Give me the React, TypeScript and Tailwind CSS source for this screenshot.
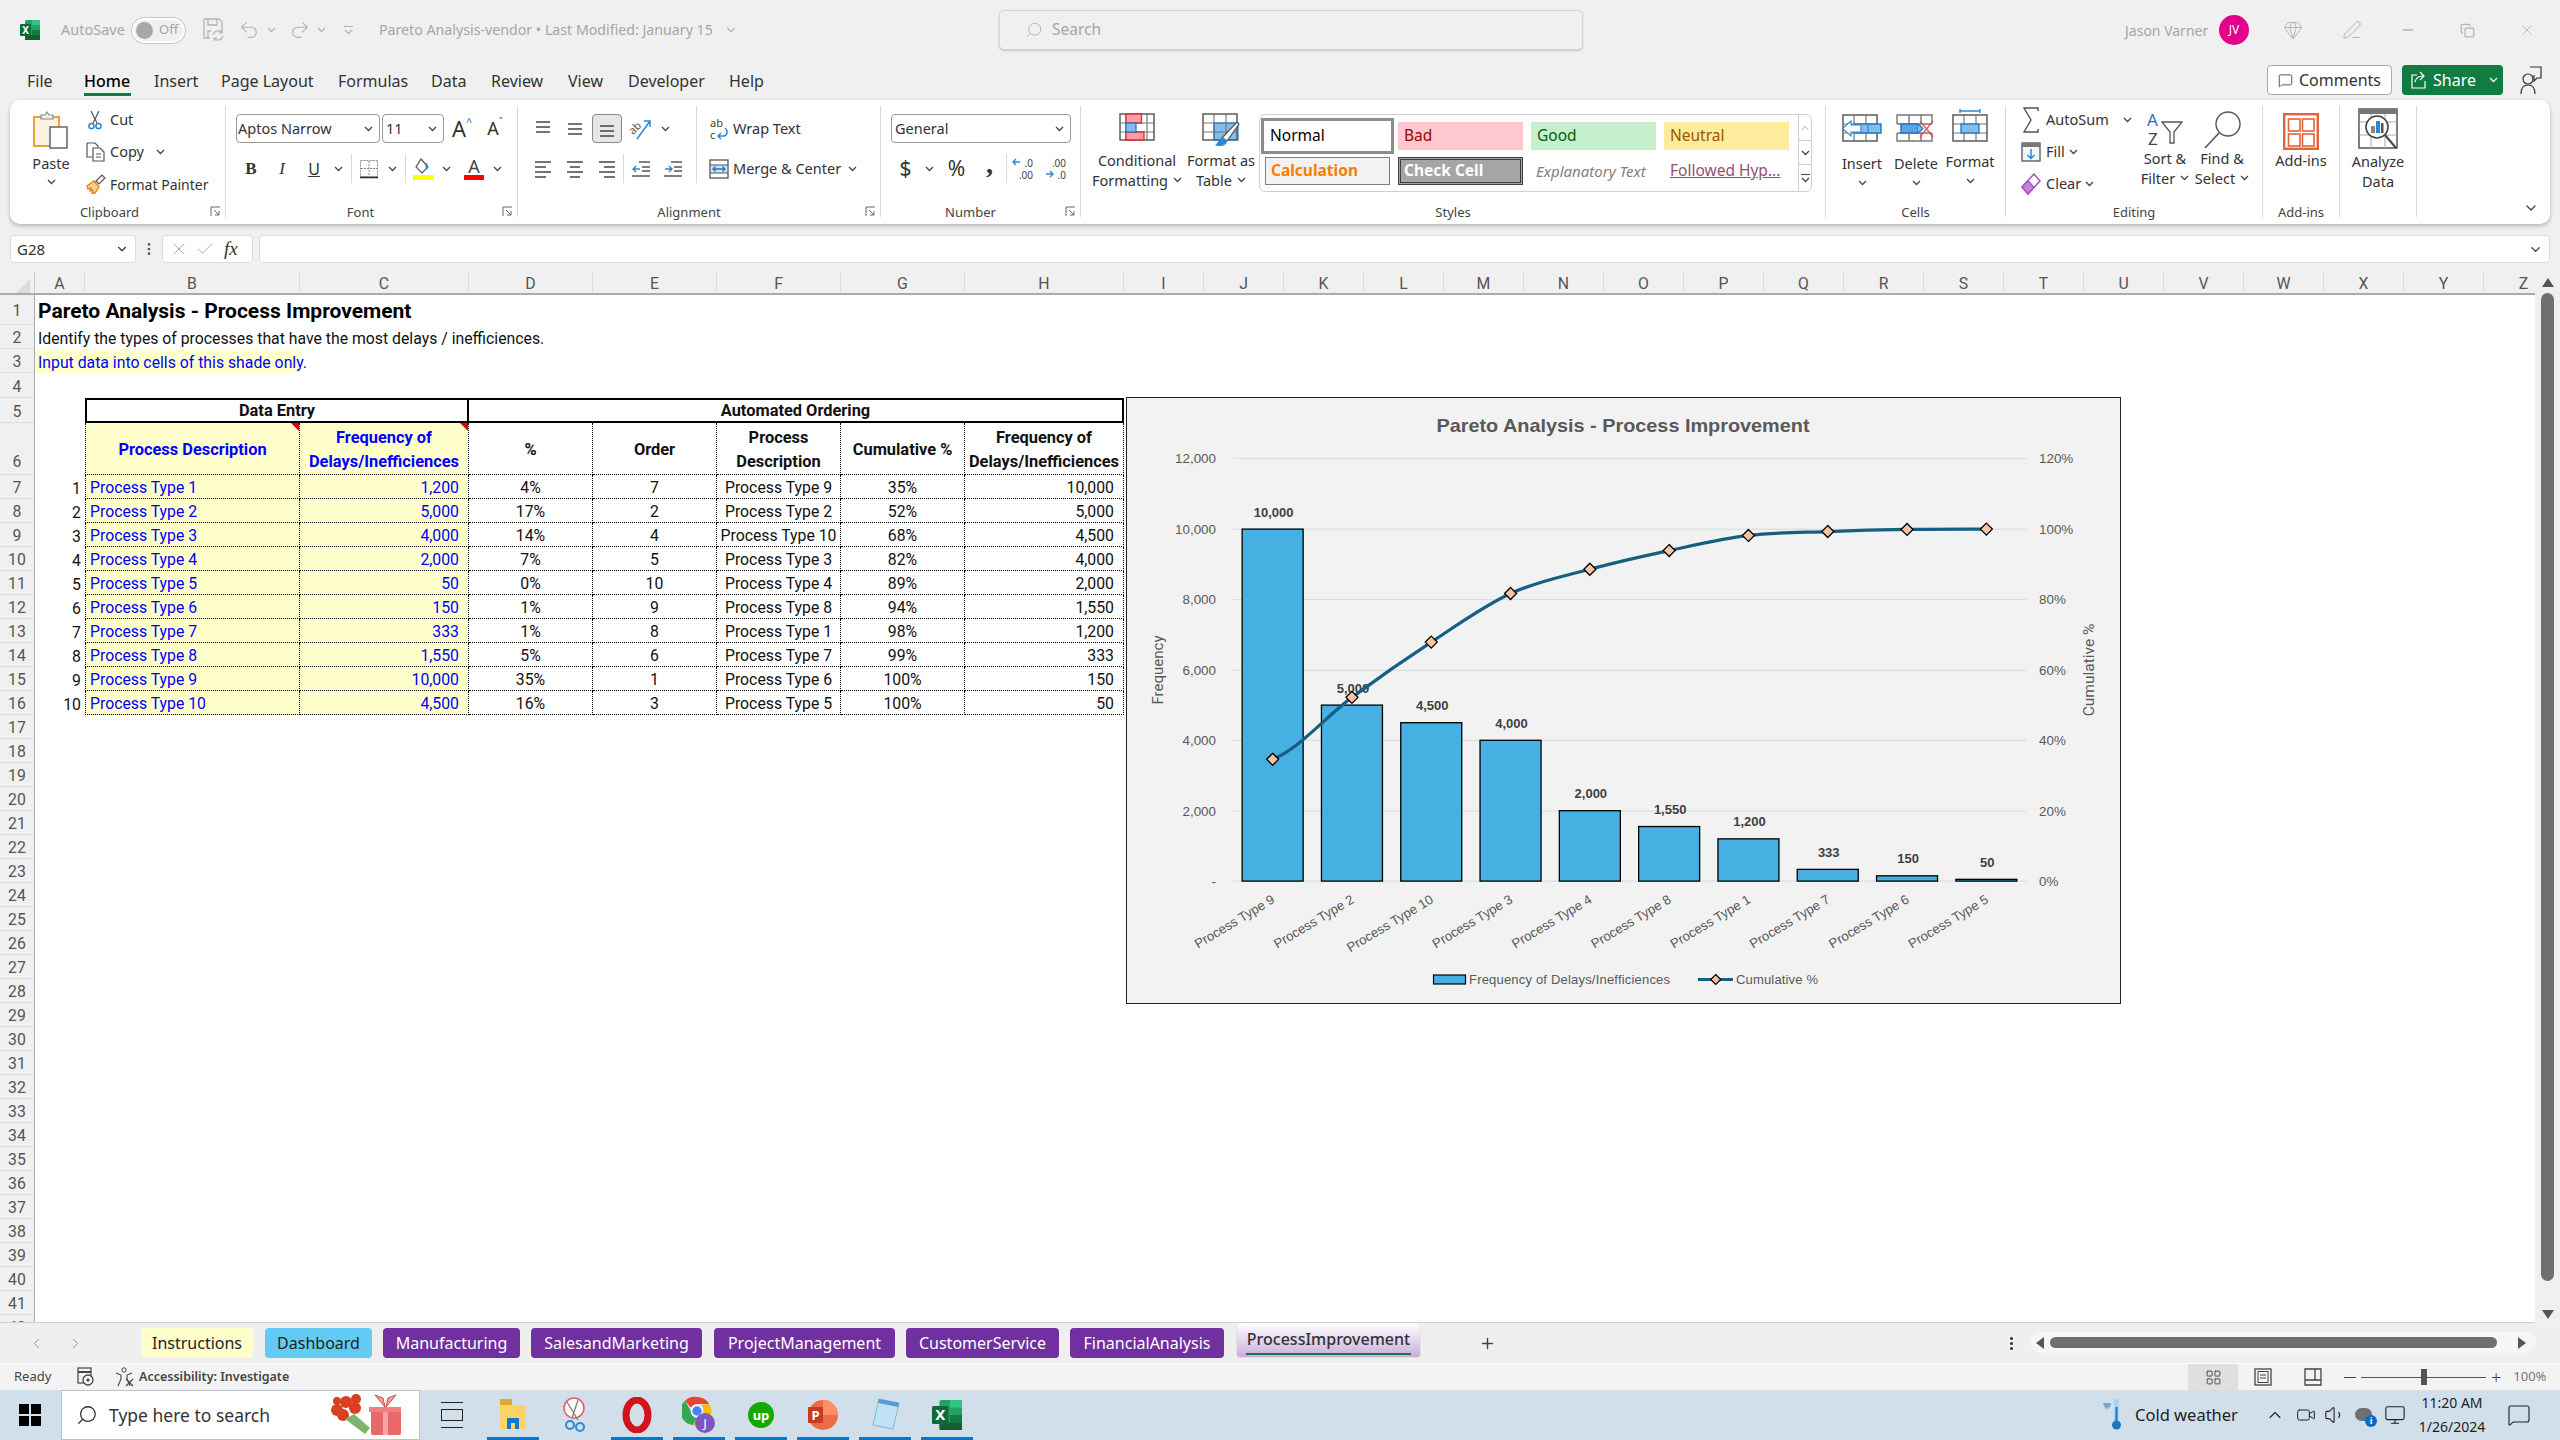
import {
  Check,
  ChevronDown,
  ChevronLeft,
  ChevronRight,
  ChevronUp,
  Copy,
  Gem,
  LayoutGrid,
  MessageSquare,
  Minus,
  Monitor,
  MoreVertical,
  PenLine,
  Plus,
  Redo2,
  Search,
  Undo2,
  Video,
  Volume1,
  X
} from 'lucide-react';

const Chev = ({ color = '#444' }: { color?: string }) => (
  <svg width="9" height="6" viewBox="0 0 9 6" className="shrink-0">
    <path d="M1 1l3.5 3.5L8 1" fill="none" stroke={color} strokeWidth="1.3" />
  </svg>
);

const Launcher = () => (
  <svg width="11" height="11" viewBox="0 0 11 11" className="absolute right-[4px] bottom-0">
    <path d="M1 10V1h9M4 4l5 5M9 5v4H5" fill="none" stroke="#666" strokeWidth="1" />
  </svg>
);

const Lines = ({ rows }: { rows: number[][] }) => (
  <svg width="20" height="20" viewBox="0 0 20 20">
    {rows.map((r, i) => (
      <line key={i} x1={r[0]} x2={r[1]} y1={r[2]} y2={r[2]} stroke="#444" strokeWidth="1.5" />
    ))}
  </svg>
);

const ExcelLogo = ({ size = 20 }: { size?: number }) => (
  <svg width={size} height={size} viewBox="0 0 20 20">
    <rect x="5" y="0" width="15" height="20" rx="1.5" fill="#21a366" />
    <rect x="12" y="0" width="8" height="5" fill="#33c481" />
    <rect x="12" y="10" width="8" height="5" fill="#107c41" />
    <rect x="5" y="15" width="15" height="5" fill="#185c37" />
    <rect x="0" y="4" width="11" height="12" rx="1" fill="#0e6b38" />
    <text x="5.5" y="13.5" fontSize="10" fontWeight="700" fill="#fff" textAnchor="middle">X</text>
  </svg>
);

const PasteIcon = () => (
  <svg width="36" height="40" viewBox="0 0 36 40">
    <rect x="1" y="7" width="25" height="29" fill="#fdf3e3" stroke="#e8a33d" strokeWidth="2" />
    <path d="M8 9V5h4l2-3 2 3h4v4z" fill="#f2f2f2" stroke="#888" strokeWidth="1.2" />
    <rect x="17" y="17" width="17" height="21" fill="#fff" stroke="#666" strokeWidth="1.5" />
  </svg>
);

const CutIcon = () => (
  <svg width="14" height="20" viewBox="0 0 14 20">
    <path d="M3 1l6 12M11 1L5 13" stroke="#555" strokeWidth="1.2" fill="none" />
    <circle cx="3.5" cy="16" r="2.6" fill="none" stroke="#2b88d8" strokeWidth="1.5" />
    <circle cx="10.5" cy="16" r="2.6" fill="none" stroke="#2b88d8" strokeWidth="1.5" />
  </svg>
);

const CopyIcon = () => (
  <svg width="20" height="20" viewBox="0 0 20 20">
    <path d="M1 1h8l3 3v2M1 1v14h5" fill="#fff" stroke="#555" strokeWidth="1.2" />
    <path d="M7 6h7l4 4v9H7z" fill="#fff" stroke="#555" strokeWidth="1.2" />
    <path d="M10 12h5M10 15h5" stroke="#555" strokeWidth="1" />
  </svg>
);

const PainterIcon = () => (
  <svg width="20" height="20" viewBox="0 0 20 20">
    <path d="M1 12l7-5 5 6-4 6H6l1-3-3 1 1-3-3 1z" fill="#fbd38a" stroke="#e07b1a" strokeWidth="1.3" />
    <path d="M10 7l6-6 3 3-6 6z" fill="#fff" stroke="#555" strokeWidth="1.2" />
  </svg>
);

const BordersIcon = () => (
  <svg width="20" height="20" viewBox="0 0 20 20">
    <rect x="1.5" y="1.5" width="17" height="16" fill="none" stroke="#888" strokeWidth="1" strokeDasharray="2 1" />
    <path d="M10 2v15M2 9.5h16" stroke="#888" strokeWidth="1" strokeDasharray="2 1" />
    <path d="M1 18.5h18" stroke="#333" strokeWidth="1.6" />
  </svg>
);

const FillColorIcon = () => (
  <svg width="22" height="24" viewBox="0 0 22 24">
    <path d="M9 2l7 8-6 6-6-6z" fill="#fff" stroke="#555" strokeWidth="1.2" />
    <path d="M14 6l1 6" stroke="#2b88d8" strokeWidth="2" />
    <rect x="1" y="18" width="20" height="5" fill="#ffff00" />
  </svg>
);

const FontColorIcon = () => (
  <svg width="20" height="24" viewBox="0 0 20 24" className="overflow-visible">
    <text x="10" y="16" fontSize="18" textAnchor="middle" fill="#444">A</text>
    <rect x="0" y="18" width="20" height="5" fill="#ff0000" />
  </svg>
);

const OrientIcon = () => (
  <svg width="24" height="24" viewBox="0 0 24 24" className="overflow-visible">
    <text x="0" y="15" fontSize="11" fill="#555" transform="rotate(-45 6 12)">ab</text>
    <path d="M8 22L21 4M15 4h6v6" fill="none" stroke="#2b88d8" strokeWidth="1.5" />
  </svg>
);

const WrapIcon = () => (
  <svg width="20" height="24" viewBox="0 0 20 24" className="overflow-visible">
    <text x="1" y="10" fontSize="11" fill="#444">ab</text>
    <text x="1" y="22" fontSize="11" fill="#444">c</text>
    <path d="M16 11c3 2 3 7-1 8H9M12 16l-3 3 3 3" fill="none" stroke="#2b88d8" strokeWidth="1.4" />
  </svg>
);

const MergeIcon = () => (
  <svg width="20" height="20" viewBox="0 0 20 20">
    <rect x="1" y="1" width="18" height="18" fill="#fff" stroke="#555" strokeWidth="1.3" />
    <rect x="2" y="6" width="16" height="8" fill="#cfe4f7" />
    <path d="M1 6h18M1 14h18" stroke="#555" strokeWidth="1" />
    <path d="M4 10h12M6.5 7.5L4 10l2.5 2.5M13.5 7.5L16 10l-2.5 2.5" fill="none" stroke="#1f74c4" strokeWidth="1.3" />
  </svg>
);

const IndentIcon = ({ out }: { out?: boolean }) => (
  <svg width="20" height="20" viewBox="0 0 20 20">
    <path d="M8 3h11M11 8h8M11 12h8M1 17h18" stroke="#555" strokeWidth="1.4" />
    <path
      d={out ? 'M9 10H2M5 7l-3 3 3 3' : 'M2 10h7M6 7l3 3-3 3'}
      fill="none"
      stroke="#2b88d8"
      strokeWidth="1.4"
    />
  </svg>
);

const DecimalIcon = ({ more }: { more?: boolean }) => (
  <svg width="24" height="24" viewBox="0 0 24 24" className="overflow-visible">
    <text x="22" y="10" fontSize="10" textAnchor="end" fill="#444">{more ? '.0' : '.00'}</text>
    <text x="22" y="22" fontSize="10" textAnchor="end" fill="#444">{more ? '.00' : '.0'}</text>
    <path
      d={more ? 'M9 5H2M5 2L2 5l3 3' : 'M2 17h7M6 14l3 3-3 3'}
      fill="none"
      stroke="#2b88d8"
      strokeWidth="1.4"
    />
  </svg>
);

// dark outer frame with the sheet lines of a ribbon icon
const GridBase = ({ xs, ys, w = 35, h = 27 }: { xs: number[]; ys: number[]; w?: number; h?: number }) => (
  <>
    {xs.map((x) => (
      <line key={x} x1={x} x2={x} y1="1" y2={h} stroke="#777" strokeWidth="1.2" />
    ))}
    {ys.map((y) => (
      <line key={y} x1="1" x2={w} y1={y} y2={y} stroke="#777" strokeWidth="1.2" />
    ))}
    <rect x="1" y="1" width={w - 1} height={h - 1} fill="none" stroke="#666" strokeWidth="1.6" />
  </>
);

const CondFormatIcon = () => (
  <svg width="36" height="28" viewBox="0 0 36 28">
    <GridBase xs={[7, 28]} ys={[10, 19]} />
    <path d="M7 1h15.5v9H7zM7 19h18v8H7z" fill="#ff9da3" stroke="#d92c2c" strokeWidth="1.3" />
    <rect x="7" y="10" width="10" height="9" fill="#85bde9" stroke="#1f74c4" strokeWidth="1.2" />
  </svg>
);

const FormatTableIcon = () => (
  <svg width="38" height="36" viewBox="0 0 38 36">
    <rect x="12" y="10" width="24" height="17" fill="#85bde9" />
    <GridBase xs={[12, 24]} ys={[10, 19]} />
    <path d="M12 10h24v17H12z" fill="none" stroke="#1f74c4" strokeWidth="1.2" />
    <path d="M20 25L35 9l2 2-12 17z" fill="#fff" stroke="#555" strokeWidth="1.2" />
    <path d="M20 25c4 0 6 3 4 6-2 2-8 3-11 1 3-1 3-6 7-7z" fill="#2b88d8" />
  </svg>
);

const InsertIcon = () => (
  <svg width="40" height="28" viewBox="0 0 40 28" className="-mt-[2px]">
    <GridBase xs={[12, 24]} ys={[10, 19]} />
    <rect x="12" y="10" width="27" height="9" fill="#85bde9" stroke="#1f74c4" strokeWidth="1.4" />
    <path d="M26 10v9" stroke="#1f74c4" strokeWidth="1" />
    <path d="M0.5 14.5L9 7v4h10v7H9v4z" fill="#fff" stroke="#2b88d8" strokeWidth="1.2" />
  </svg>
);

const DeleteIcon = () => (
  <svg width="40" height="28" viewBox="0 0 40 28" className="-mt-[2px]">
    <path d="M1 10V1h35v9M1 19v8h35v-8M1 10h35M1 19h35M13 1v9M25 1v9M13 19v8M25 19v8" fill="none" stroke="#777" strokeWidth="1.4" />
    <rect x="5" y="10" width="17" height="9" fill="#5ea3e0" stroke="#1f74c4" strokeWidth="1.4" />
    <path d="M22 10l5 4.5-5 4.5" fill="#85bde9" stroke="#1f74c4" strokeWidth="1.3" />
    <path d="M24 7l13 16M37 7L24 23" stroke="#ef4e4e" strokeWidth="1.3" />
  </svg>
);

const FormatCellIcon = () => (
  <svg width="36" height="33" viewBox="0 0 36 33" className="-mt-[5px]">
    <path d="M8 2h20M8 0v4M28 0v4" stroke="#2b88d8" strokeWidth="1.4" />
    <g transform="translate(0 5)">
      <GridBase xs={[12, 24]} ys={[10, 19]} />
      <rect x="9" y="10" width="18" height="9" fill="#85bde9" stroke="#1f74c4" strokeWidth="1.3" />
    </g>
  </svg>
);

const SumIcon = () => (
  <svg width="18" height="26" viewBox="0 0 18 26">
    <path d="M16 4V1H2l7 12-7 12h14v-3" fill="none" stroke="#555" strokeWidth="1.4" />
  </svg>
);

const SortIcon = () => (
  <svg width="38" height="36" viewBox="0 0 38 36" className="overflow-visible">
    <text x="1" y="15" fontSize="17" fill="#1f74c4">A</text>
    <text x="2" y="34" fontSize="17" fill="#444">Z</text>
    <path d="M16 11h20l-8 10v11h-4V21z" fill="#fff" stroke="#555" strokeWidth="1.3" />
  </svg>
);

const FindIcon = () => (
  <svg width="40" height="38" viewBox="0 0 40 38">
    <circle cx="26" cy="13" r="12" fill="#fff" stroke="#555" strokeWidth="1.4" />
    <path d="M17 22L3 37" stroke="#555" strokeWidth="1.6" />
  </svg>
);

const AddinsIcon = () => (
  <svg width="36" height="37" viewBox="0 0 36 37">
    <rect x="1.2" y="1.2" width="33.6" height="34.6" fill="#fff" stroke="#e2653b" strokeWidth="2.4" />
    <rect x="5.5" y="6" width="11.5" height="12" fill="#fff" stroke="#e2653b" strokeWidth="1.6" />
    <rect x="19.5" y="6" width="11.5" height="12" fill="#fff" stroke="#e2653b" strokeWidth="1.6" />
    <rect x="5.5" y="21" width="11.5" height="12" fill="#fff" stroke="#e2653b" strokeWidth="1.6" />
    <rect x="19.5" y="21" width="11.5" height="12" fill="#fff" stroke="#e2653b" strokeWidth="1.6" />
  </svg>
);

const AnalyzeIcon = () => (
  <svg width="40" height="41" viewBox="0 0 40 41">
    <rect x="1" y="1" width="38" height="39" fill="#fff" stroke="#555" strokeWidth="1.5" />
    <rect x="1" y="1" width="38" height="5" fill="#777" />
    <path d="M1 14h38M1 27h38M13 6v34M27 6v34" stroke="#aaa" strokeWidth="1" />
    <circle cx="19" cy="19" r="11" fill="#fff" stroke="#444" strokeWidth="1.6" />
    <rect x="13" y="18" width="4" height="7" fill="#888" />
    <rect x="18" y="13" width="4" height="12" fill="#2b88d8" />
    <rect x="23" y="15" width="2.5" height="10" fill="#555" />
    <path d="M27 27l11 13" stroke="#444" strokeWidth="2" />
  </svg>
);

const SaveIcon = () => (
  <svg width="22" height="24" viewBox="0 0 22 24">
    <path d="M2 1h15l3 3v9M2 1v19h6M6 1v6h9V1M6 20v-7h3" fill="none" stroke="#b4b4b4" strokeWidth="1.3" />
    <path d="M11 17a5 5 0 0 1 9-2M21 18a5 5 0 0 1-9 2M20 12v3h-3M12 23v-3h3" fill="none" stroke="#b4b4b4" strokeWidth="1.2" />
  </svg>
);

const bottomBtn = 'flex items-center justify-center';

const BigButton = ({
  className,
  icon,
  lines,
  pad = 'pt-[8px]'
}: {
  className: string;
  icon: React.ReactNode;
  lines: React.ReactNode[];
  pad?: string;
}) => (
  <div className={`${className} ${pad} flex flex-col items-center shrink-0`}>
    <div className="h-[37px] shrink-0 flex items-start justify-center">{icon}</div>
    {lines.map((l, i) => (
      <div key={i} className="h-[20px] shrink-0 leading-[20px] flex items-center gap-[5px] whitespace-nowrap text-[14.5px] text-[#333]">
        {l}
      </div>
    ))}
  </div>
);

const Group = ({
  className,
  label,
  labelPad = '',
  launcher,
  children
}: {
  className: string;
  label?: string;
  labelPad?: string;
  launcher?: boolean;
  children: React.ReactNode;
}) => (
  <div className={`${className} relative h-[111px] border-r border-[#d9d9d9] shrink-0 flex flex-col`}>
    <div className="h-[96px] shrink-0 flex">{children}</div>
    <div className={`${labelPad} h-[20px] shrink-0 leading-[20px] text-center text-[13px] text-[#444]`}>{label}</div>
    {launcher && <Launcher />}
  </div>
);

const Ribbon = () => (
  <div className="mx-[10px] h-[124px] pt-[6px] bg-white rounded-[10px] shadow-[0_2px_4px_rgba(0,0,0,0.25)] flex text-[14.5px] text-[#333]">
    <Group className="w-[216px]" label="Clipboard" labelPad="pr-[16px]" launcher>
      <div className="w-[17px]" />
      <div className="w-[48px] flex flex-col items-center pt-[4px]">
        <div className="h-[42px] shrink-0"><PasteIcon /></div>
        <div className="h-[20px] shrink-0 leading-[20px] mt-[1px]">Paste</div>
        <div className="mt-[6px]"><Chev /></div>
      </div>
      <div className="ml-[11px] flex flex-col gap-[4px]">
        <div className="h-[28px] flex items-center"><div className="w-[24px] pl-[2px]"><CutIcon /></div>Cut</div>
        <div className="h-[28px] flex items-center"><div className="w-[24px]"><CopyIcon /></div>Copy<div className="ml-[12px]"><Chev /></div></div>
        <div className="h-[28px] flex items-center whitespace-nowrap text-[14px]"><div className="w-[24px]"><PainterIcon /></div>Format Painter</div>
      </div>
    </Group>
    <Group className="w-[292px]" label="Font" labelPad="pr-[22px]" launcher>
      <div className="pl-[10px] pt-[8px] flex flex-col">
        <div className="h-[29px] shrink-0 flex">
          <div className="w-[144px] border border-[#999] rounded-[4px] flex items-center justify-between pl-[1px] pr-[6px]">Aptos Narrow<Chev /></div>
          <div className="w-[62px] ml-[2px] border border-[#999] rounded-[4px] flex items-center justify-between pl-[3px] pr-[6px]">11<Chev /></div>
          <div className={`w-[36px] text-[22px] ${bottomBtn}`}>A<span className="text-[10px] text-[#2b6cb0] -mt-[12px]">^</span></div>
          <div className={`w-[30px] text-[18px] ${bottomBtn}`}>A<span className="text-[10px] text-[#2b6cb0] -mt-[12px]">ˇ</span></div>
        </div>
        <div className="h-[29px] shrink-0 mt-[11px] flex items-center">
          <div className={`w-[30px] font-bold font-['Liberation_Serif',serif] text-[17px] ${bottomBtn}`}>B</div>
          <div className={`w-[32px] italic font-['Liberation_Serif',serif] text-[17px] ${bottomBtn}`}>I</div>
          <div className={`w-[32px] underline text-[16px] ${bottomBtn}`}>U</div>
          <div className={`w-[16px] ${bottomBtn}`}><Chev /></div>
          <div className="ml-[5px] w-[1px] h-[29px] bg-[#d9d9d9]" />
          <div className={`w-[33px] ${bottomBtn}`}><BordersIcon /></div>
          <div className={`w-[14px] ${bottomBtn}`}><Chev /></div>
          <div className="ml-[6px] w-[1px] h-[29px] bg-[#d9d9d9]" />
          <div className={`w-[34px] ${bottomBtn}`}><FillColorIcon /></div>
          <div className={`w-[12px] ${bottomBtn}`}><Chev /></div>
          <div className={`ml-[8px] w-[28px] ${bottomBtn}`}><FontColorIcon /></div>
          <div className={`w-[18px] ${bottomBtn}`}><Chev /></div>
        </div>
      </div>
    </Group>
    <Group className="w-[363px]" label="Alignment" labelPad="pr-[20px]" launcher>
      <div className="w-[179px] pl-[9px] pt-[8px] flex flex-col border-r border-[#d9d9d9] h-[77px]">
        <div className="h-[29px] shrink-0 flex items-center">
          <div className={`w-[32px] ${bottomBtn}`}><Lines rows={[[3, 17, 3], [3, 17, 8], [3, 17, 13]]} /></div>
          <div className={`w-[32px] ${bottomBtn}`}><Lines rows={[[3, 17, 5], [3, 17, 10], [3, 17, 15]]} /></div>
          <div className={`w-[30px] h-[29px] mx-[1px] border border-[#888] rounded-[4px] bg-[#e6e6e6] ${bottomBtn}`}><Lines rows={[[3, 17, 7], [3, 17, 12], [3, 17, 17]]} /></div>
          <div className={`w-[36px] ${bottomBtn}`}><OrientIcon /></div>
          <div className={`w-[12px] ${bottomBtn}`}><Chev /></div>
        </div>
        <div className="h-[29px] shrink-0 mt-[11px] flex items-center">
          <div className={`w-[32px] ${bottomBtn}`}><Lines rows={[[2, 18, 3], [2, 13, 8], [2, 18, 13], [2, 13, 18]]} /></div>
          <div className={`w-[32px] ${bottomBtn}`}><Lines rows={[[2, 18, 3], [5, 15, 8], [2, 18, 13], [5, 15, 18]]} /></div>
          <div className={`w-[32px] ${bottomBtn}`}><Lines rows={[[2, 18, 3], [7, 18, 8], [2, 18, 13], [7, 18, 18]]} /></div>
          <div className="w-[1px] h-[29px] bg-[#d9d9d9]" />
          <div className={`w-[34px] ${bottomBtn}`}><IndentIcon out /></div>
          <div className={`w-[30px] ${bottomBtn}`}><IndentIcon /></div>
        </div>
      </div>
      <div className="pt-[8px] flex flex-col">
        <div className="h-[29px] shrink-0 flex items-center"><div className={`ml-[8px] w-[28px] ${bottomBtn}`}><WrapIcon /></div>Wrap Text</div>
        <div className="h-[29px] shrink-0 mt-[11px] flex items-center whitespace-nowrap"><div className={`ml-[8px] w-[28px] ${bottomBtn}`}><MergeIcon /></div><div className="w-[115px]">Merge &amp; Center</div><Chev /></div>
      </div>
    </Group>
    <Group className="w-[200px]" label="Number" labelPad="pr-[20px]" launcher>
      <div className="pl-[10px] pt-[8px] flex flex-col">
        <div className="h-[29px] shrink-0 w-[180px] border border-[#999] rounded-[4px] flex items-center justify-between pl-[3px] pr-[6px]">General<Chev /></div>
        <div className="h-[29px] shrink-0 mt-[11px] flex items-center">
          <div className={`w-[29px] text-[21px] ${bottomBtn}`}>$</div>
          <div className={`w-[18px] ${bottomBtn}`}><Chev /></div>
          <div className={`w-[37px] text-[21px] ${bottomBtn}`}>%</div>
          <div className={`w-[29px] text-[28px] font-bold font-['Liberation_Serif',serif] leading-[14px] pb-[10px] ${bottomBtn}`}>,</div>
          <div className="ml-[2px] w-[1px] h-[29px] bg-[#d9d9d9]" />
          <div className={`w-[32px] ${bottomBtn}`}><DecimalIcon more /></div>
          <div className={`w-[34px] ${bottomBtn}`}><DecimalIcon /></div>
        </div>
      </div>
    </Group>
    <Group className="w-[745px]" label="Styles">
      <BigButton className="w-[112px]" pad="pt-[7px]" icon={<CondFormatIcon />} lines={['Conditional', <>Formatting <Chev /></>]} />
      <BigButton className="w-[56px]" pad="pt-[7px]" icon={<FormatTableIcon />} lines={['Format as', <>Table <Chev /></>]} />
      <div className="ml-[10px] mt-[8px] w-[553px] h-[78px] border border-[#d0d0d0] rounded-[6px] flex text-[15.5px] whitespace-nowrap">
        <div className="w-[534px] shrink-0 flex flex-col">
          <div className="h-[36px] shrink-0 mt-[2px] flex items-center pt-[1px]">
            <div className="w-[133px] h-[36px] ml-[1px] border-[3px] border-[#8c8c8c] pl-[6px] text-black flex items-center">Normal</div>
            <div className="w-[125px] h-[28px] ml-[4px] bg-[#ffc7ce] text-[#9c0006] pl-[6px] flex items-center">Bad</div>
            <div className="w-[125px] h-[28px] ml-[8px] bg-[#c6efce] text-[#006100] pl-[6px] flex items-center">Good</div>
            <div className="w-[125px] h-[28px] ml-[8px] bg-[#ffeb9c] text-[#9c5700] pl-[6px] flex items-center">Neutral</div>
          </div>
          <div className="h-[28px] shrink-0 mt-[4px] flex items-center">
            <div className="w-[125px] h-[28px] ml-[5px] bg-[#f2f2f2] border border-[#7f7f7f] text-[#fa7d00] font-bold pl-[5px] flex items-center">Calculation</div>
            <div className="w-[125px] h-[28px] ml-[8px] bg-[#a5a5a5] border-[3px] border-double border-[#3f3f3f] text-white font-bold pl-[3px] flex items-center">Check Cell</div>
            <div className="w-[125px] h-[28px] ml-[8px] italic text-[#7f7f7f] pl-[5px] flex items-center text-[15px]">Explanatory Text</div>
            <div className="w-[125px] h-[28px] ml-[8px] underline text-[#954f72] pl-[6px] flex items-center">Followed Hyp...</div>
          </div>
        </div>
        <div className="ml-[4px] flex-1 flex flex-col border-l border-[#d0d0d0]">
          <div className={`h-[26px] border-b border-[#d0d0d0] ${bottomBtn}`}><ChevronUp size={12} color="#aaa" /></div>
          <div className={`h-[24px] border-b border-[#d0d0d0] ${bottomBtn}`}><Chev /></div>
          <div className={`flex-1 flex-col ${bottomBtn}`}><div className="w-[9px] h-[1px] bg-[#444] mb-[2px]" /><Chev /></div>
        </div>
      </div>
    </Group>
    <Group className="w-[180px]" label="Cells">
      <div className="w-[6px]" />
      <BigButton className="w-[60px]" pad="pt-[10px]" icon={<InsertIcon />} lines={['Insert', <Chev />]} />
      <BigButton className="w-[48px]" pad="pt-[10px]" icon={<DeleteIcon />} lines={['Delete', <Chev />]} />
      <BigButton className="w-[60px]" icon={<FormatCellIcon />} lines={['Format', <Chev />]} />
    </Group>
    <Group className="w-[257px]" label="Editing">
      <div className="w-[130px] pl-[15px] flex flex-col gap-[4px]">
        <div className="h-[28px] flex items-center"><div className={`w-[20px] ${bottomBtn}`}><SumIcon /></div><span className="ml-[5px]">AutoSum</span><div className="ml-[14px]"><Chev /></div></div>
        <div className="h-[28px] flex items-center">
          <div className={`w-[20px] ${bottomBtn}`}>
            <svg width="20" height="20" viewBox="0 0 20 20"><rect x="1" y="1" width="18" height="18" fill="#f2f7fc" stroke="#555" strokeWidth="1.3" /><rect x="1" y="1" width="18" height="4" fill="#777" /><path d="M10 7v9M6.5 13l3.5 3.5L13.5 13" fill="none" stroke="#2b88d8" strokeWidth="1.5" /></svg>
          </div>
          <span className="ml-[5px]">Fill</span><div className="ml-[4px]"><Chev /></div>
        </div>
        <div className="h-[28px] flex items-center">
          <div className={`w-[20px] ${bottomBtn}`}>
            <svg width="20" height="22" viewBox="0 0 20 22"><path d="M13 1l6 7-12 13-6-7z" fill="#fff" stroke="#a24fbf" strokeWidth="1.5" /><path d="M7 7.5l6 7L7 21l-6-7z" fill="#c483d8" stroke="#a24fbf" strokeWidth="1.2" /></svg>
          </div>
          <span className="ml-[5px]">Clear</span><div className="ml-[4px]"><Chev /></div>
        </div>
      </div>
      <BigButton className="w-[58px]" pad="pt-[5px]" icon={<SortIcon />} lines={['Sort &', <>Filter <Chev /></>]} />
      <BigButton className="w-[56px]" pad="pt-[5px]" icon={<FindIcon />} lines={['Find &', <>Select <Chev /></>]} />
    </Group>
    <Group className="w-[77px]" label="Add-ins">
      <BigButton className="w-full" pad="pt-[7px]" icon={<AddinsIcon />} lines={['Add-ins']} />
    </Group>
    <Group className="w-[77px]">
      <BigButton className="w-full" pad="pt-[2px]" icon={<AnalyzeIcon />} lines={[<span className="mt-[12px]">Analyze</span>, <span className="mt-[12px]">Data</span>]} />
    </Group>
    <div className="flex-1 flex items-end justify-end pr-[11px] pb-[8px]"><ChevronDown size={16} color="#444" /></div>
  </div>
);

const TitleBar = () => (
  <div className="h-[60px] flex items-center text-[14.5px] text-[#a6a6a6] whitespace-nowrap">
    <div className="w-[999px] shrink-0 flex items-center">
      <div className="ml-[20px]"><ExcelLogo /></div>
      <div className="ml-[21px] w-[63px]">AutoSave</div>
      <div className="ml-[8px] w-[53px] h-[25px] rounded-full border-2 border-white bg-[#f0f0f0] shadow-[0_0_0_1px_#c8c8c8] flex items-center pl-[2px] gap-[6px] text-[13px]">
        <div className="w-[17px] h-[17px] rounded-full bg-[#a8a8a8]" />Off
      </div>
      <div className="ml-[17px]"><SaveIcon /></div>
      <div className="ml-[14px]"><Undo2 size={22} color="#b4b4b4" strokeWidth={1.3} /></div>
      <div className="ml-[7px]"><Chev color="#b4b4b4" /></div>
      <div className="ml-[13px]"><Redo2 size={22} color="#b4b4b4" strokeWidth={1.3} /></div>
      <div className="ml-[6px]"><Chev color="#b4b4b4" /></div>
      <div className="ml-[18px] flex flex-col items-center gap-[2px]"><div className="w-[9px] h-[1px] bg-[#b4b4b4]" /><Chev color="#b4b4b4" /></div>
      <div className="ml-[26px] w-[341px] text-[14.2px]">Pareto Analysis-vendor  •  Last Modified: January 15</div>
      <div className="ml-[4px]"><ChevronDown size={14} color="#b4b4b4" /></div>
    </div>
    <div className="w-[584px] h-[40px] shrink-0 bg-[#f0f0f0] border border-[#d6d6d6] rounded-[5px] shadow-[0_1px_2px_rgba(0,0,0,0.2)] flex items-center pl-[25px] gap-[9px] text-[15.5px]">
      <Search size={18} color="#b4b4b4" className="-scale-x-100" strokeWidth={1.3} />Search
    </div>
    <div className="ml-[542px] w-[83px] shrink-0 text-[14px]">Jason Varner</div>
    <div className="ml-[11px] w-[30px] h-[30px] shrink-0 rounded-full bg-[#e3008c] text-white text-[12px] flex items-center justify-center">JV</div>
    <div className="ml-[34px]"><Gem size={20} color="#b4b4b4" strokeWidth={1.2} /></div>
    <div className="ml-[39px]"><PenLine size={20} color="#b4b4b4" strokeWidth={1.2} /></div>
    <div className="ml-[38px]"><Minus size={16} color="#b4b4b4" /></div>
    <div className="ml-[44px]"><Copy size={15} color="#b4b4b4" /></div>
    <div className="ml-[43px]"><X size={18} color="#b4b4b4" strokeWidth={1.2} /></div>
  </div>
);

const menuTabs = [
  { label: 'File', cls: 'w-[57px]' },
  { label: 'Home', cls: 'w-[70px]' },
  { label: 'Insert', cls: 'w-[67px]' },
  { label: 'Page Layout', cls: 'w-[117px]' },
  { label: 'Formulas', cls: 'w-[93px]' },
  { label: 'Data', cls: 'w-[60px]' },
  { label: 'Review', cls: 'w-[77px]' },
  { label: 'View', cls: 'w-[60px]' },
  { label: 'Developer', cls: 'w-[101px]' },
  { label: 'Help', cls: 'w-[60px]' }
];

const TabRow = () => (
  <div className="h-[40px] pl-[27px] flex items-start text-[16px] text-[#333] whitespace-nowrap">
    {menuTabs.map((t) => (
      <div key={t.label} className={`${t.cls} shrink-0 h-[36px] pt-[9px] leading-[24px] relative`}>
        <span className={t.label === 'Home' ? 'font-medium text-black' : ''}>{t.label}</span>
        {t.label === 'Home' && <div className="absolute left-0 bottom-0 w-[47px] h-[3px] bg-[#107c41]" />}
      </div>
    ))}
    <div className="ml-[1478px] shrink-0 mt-[5px] w-[125px] h-[30px] bg-white border border-[#aaa] rounded-[4px] flex items-center justify-center gap-[6px]">
      <MessageSquare size={15} strokeWidth={1.3} />Comments
    </div>
    <div className="ml-[10px] shrink-0 mt-[5px] w-[101px] h-[30px] bg-[#107c41] text-white rounded-[4px] flex items-center pl-[9px] gap-[6px]">
      <svg width="16" height="18" viewBox="0 0 16 18"><path d="M6 4H1v13h13v-7" fill="none" stroke="#fff" strokeWidth="1.2" /><path d="M4 11c1-4 4-6 8-6M9 1l4 4-4 4" fill="none" stroke="#fff" strokeWidth="1.2" /></svg>
      <span>Share</span>
      <div className="ml-[7px]"><Chev color="#fff" /></div>
    </div>
    <div className="ml-[17px] shrink-0 mt-[5px]">
      <svg width="22" height="30" viewBox="0 0 22 30"><circle cx="8" cy="14" r="5" fill="none" stroke="#333" strokeWidth="1.2" /><path d="M1 29c0-6 3-9 7-9s7 3 7 9" fill="none" stroke="#333" strokeWidth="1.2" /><path d="M10 2h11v11h-4l-3 3v-6" fill="none" stroke="#333" strokeWidth="1.2" /></svg>
    </div>
  </div>
);

const FormulaBar = () => (
  <div className="mt-[11px] mx-[10px] h-[28px] flex text-[15px] text-[#333]">
    <div className="w-[126px] bg-white border border-[#dcdcdc] rounded-[4px] flex items-center justify-between pl-[6px] pr-[6px]">G28<ChevronDown size={14} /></div>
    <div className="w-[26px] flex items-center justify-center"><MoreVertical size={16} color="#555" /></div>
    <div className="w-[91px] bg-white border border-[#dcdcdc] rounded-[4px] flex items-center pl-[6px] gap-[6px]">
      <X size={20} color="#aaa" strokeWidth={1.2} />
      <Check size={20} color="#aaa" strokeWidth={1.2} />
      <span className="italic font-['Liberation_Serif',serif] text-[19px] ml-[3px]">fx</span>
    </div>
    <div className="ml-[6px] flex-1 bg-white border border-[#dcdcdc] rounded-[4px] flex items-center justify-end pr-[6px]"><ChevronDown size={15} /></div>
  </div>
);

const columns = [
  { n: 'A', cls: 'w-[50px]' },
  { n: 'B', cls: 'w-[215px]' },
  { n: 'C', cls: 'w-[169px]' },
  { n: 'D', cls: 'w-[124px]' },
  { n: 'E', cls: 'w-[124px]' },
  { n: 'F', cls: 'w-[124px]' },
  { n: 'G', cls: 'w-[124px]' },
  { n: 'H', cls: 'w-[159px]' },
  ...'IJKLMNOPQRSTUVWXYZ'.split('').map((n) => ({ n, cls: 'w-[80px]' }))
];

const rowHeights = (n: number) => {
  if (n === 1) return 'h-[30px]';
  if (n === 4 || n === 5) return 'h-[25px]';
  if (n === 6) return 'h-[52px]';
  return 'h-[24px]';
};

const entries: [string, string][] = [
  ['Process Type 1', '1,200'],
  ['Process Type 2', '5,000'],
  ['Process Type 3', '4,000'],
  ['Process Type 4', '2,000'],
  ['Process Type 5', '50'],
  ['Process Type 6', '150'],
  ['Process Type 7', '333'],
  ['Process Type 8', '1,550'],
  ['Process Type 9', '10,000'],
  ['Process Type 10', '4,500']
];

const ordered: [string, string, string, string, string][] = [
  ['4%', '7', 'Process Type 9', '35%', '10,000'],
  ['17%', '2', 'Process Type 2', '52%', '5,000'],
  ['14%', '4', 'Process Type 10', '68%', '4,500'],
  ['7%', '5', 'Process Type 3', '82%', '4,000'],
  ['0%', '10', 'Process Type 4', '89%', '2,000'],
  ['1%', '9', 'Process Type 8', '94%', '1,550'],
  ['1%', '8', 'Process Type 1', '98%', '1,200'],
  ['5%', '6', 'Process Type 7', '99%', '333'],
  ['35%', '1', 'Process Type 6', '100%', '150'],
  ['16%', '3', 'Process Type 5', '100%', '50']
];

const cell = 'h-full shrink-0 border-r border-b border-dotted border-black flex items-center pt-[3px]';

const Corner = () => (
  <div className="absolute top-0 right-0 w-0 h-0 border-t-[8px] border-l-[8px] border-t-[#e00000] border-l-transparent" />
);

const SheetTable = () => (
  <div className="font-['Roboto',sans-serif] text-[15.8px] text-[#111] whitespace-nowrap">
    <div className="h-[30px] pl-[3px] pt-[4px] flex items-center font-bold text-[21px] text-black">Pareto Analysis - Process Improvement</div>
    <div className="h-[24px] pl-[3px] pt-[3px] flex items-center">Identify the types of processes that have the most delays / inefficiences.</div>
    <div className="h-[24px] w-[265px] pl-[3px] pt-[3px] flex items-center bg-[#ffffcc] text-[#0000ff]">Input data into cells of this shade only.</div>
    <div className="h-[25px]" />
    <div className="h-[25px] pl-[50px] flex font-bold text-[16.4px]">
      <div className="w-[384px] shrink-0 border-[2.5px] border-black pt-[2px] flex items-center justify-center">Data Entry</div>
      <div className="w-[655px] shrink-0 border-[2.5px] border-l-0 border-black pt-[2px] flex items-center justify-center">Automated Ordering</div>
    </div>
    <div className="h-[52px] pl-[50px] flex font-bold text-center leading-[24px] text-[16.4px]">
      <div className={`w-[215px] ${cell} relative justify-center border-l bg-[#ffffcc] text-[#0000ff]`}>Process Description<Corner /></div>
      <div className={`w-[169px] ${cell} relative justify-center bg-[#ffffcc] text-[#0000ff]`}>Frequency of<br />Delays/Inefficiences<Corner /></div>
      <div className={`w-[124px] ${cell} justify-center`}>%</div>
      <div className={`w-[124px] ${cell} justify-center`}>Order</div>
      <div className={`w-[124px] ${cell} justify-center`}>Process<br />Description</div>
      <div className={`w-[124px] ${cell} justify-center`}>Cumulative %</div>
      <div className={`w-[159px] ${cell} justify-center`}>Frequency of<br />Delays/Inefficiences</div>
    </div>
    {entries.map((e, i) => (
      <div key={i} className="h-[24px] flex">
        <div className="w-[50px] shrink-0 pr-[4px] pt-[2px] text-right leading-[24px]">{i + 1}</div>
        <div className={`w-[215px] ${cell} border-l bg-[#ffffcc] text-[#0000ff] pl-[4px]`}>{e[0]}</div>
        <div className={`w-[169px] ${cell} bg-[#ffffcc] text-[#0000ff] justify-end pr-[9px]`}>{e[1]}</div>
        <div className={`w-[124px] ${cell} justify-center`}>{ordered[i][0]}</div>
        <div className={`w-[124px] ${cell} justify-center`}>{ordered[i][1]}</div>
        <div className={`w-[124px] ${cell} justify-center`}>{ordered[i][2]}</div>
        <div className={`w-[124px] ${cell} justify-center`}>{ordered[i][3]}</div>
        <div className={`w-[159px] ${cell} justify-end pr-[9px]`}>{ordered[i][4]}</div>
      </div>
    ))}
  </div>
);

// chart geometry, in page pixels so the numbers read straight off the screenshot
const plotLeft = 1233;
const plotRight = 2026;
const plotBottom = 881.1;
const catWidth = (plotRight - plotLeft) / 10;
const chartCats = [
  { label: 'Process Type 9', v: 10000, text: '10,000', pct: 34.6 },
  { label: 'Process Type 2', v: 5000, text: '5,000', pct: 52.2 },
  { label: 'Process Type 10', v: 4500, text: '4,500', pct: 67.9 },
  { label: 'Process Type 3', v: 4000, text: '4,000', pct: 81.7 },
  { label: 'Process Type 4', v: 2000, text: '2,000', pct: 88.6 },
  { label: 'Process Type 8', v: 1550, text: '1,550', pct: 93.9 },
  { label: 'Process Type 1', v: 1200, text: '1,200', pct: 98.2 },
  { label: 'Process Type 7', v: 333, text: '333', pct: 99.3 },
  { label: 'Process Type 6', v: 150, text: '150', pct: 99.9 },
  { label: 'Process Type 5', v: 50, text: '50', pct: 100 }
].map((c, i) => ({
  ...c,
  cx: plotLeft + catWidth * (i + 0.5),
  top: plotBottom - c.v * 0.0352,
  py: plotBottom - c.pct * 3.52
}));

const smoothPath = chartCats.reduce((d, c, i, all) => {
  if (i === 0) return `M${c.cx} ${c.py}`;
  const p0 = all[i - 2] ?? all[i - 1];
  const p1 = all[i - 1];
  const p3 = all[i + 1] ?? c;
  const c1y = p1.py + (c.py - p0.py) / 6;
  const c2y = c.py - (p3.py - p1.py) / 6;
  return `${d} C${p1.cx + catWidth / 3} ${c1y} ${c.cx - catWidth / 3} ${c2y} ${c.cx} ${c.py}`;
}, '');

const ticks = [
  { y: 458.4, l: '12,000', r: '120%' },
  { y: 529.2, l: '10,000', r: '100%' },
  { y: 599.6, l: '8,000', r: '80%' },
  { y: 670.3, l: '6,000', r: '60%' },
  { y: 740.3, l: '4,000', r: '40%' },
  { y: 811.1, l: '2,000', r: '20%' },
  { y: 881.1, l: '-', r: '0%' }
];

const Diamond = ({ x, y }: { x: number; y: number }) => (
  <path d={`M${x} ${y - 6}l6 6-6 6-6-6z`} fill="#f6c3a2" stroke="#000" strokeWidth="1.3" />
);

const ParetoChart = () => (
  <div className="absolute left-[1126px] top-[125px] w-[995px] h-[607px] bg-[#f2f2f2] border-[1.5px] border-[#222]">
    <svg width="995" height="607" viewBox="1126 397 995 607" className="absolute -left-[1.5px] -top-[1.5px] font-['Liberation_Sans',sans-serif]">
      <text x="1623" y="431.5" fontSize="19" fontWeight="700" fill="#595959" textAnchor="middle" textLength="373" lengthAdjust="spacingAndGlyphs">Pareto Analysis - Process Improvement</text>
      {ticks.map((t) => (
        <g key={t.r} fontSize="13.4" fill="#595959">
          <line x1={plotLeft} x2={plotRight} y1={t.y} y2={t.y} stroke="#d9d9d9" strokeWidth="1" />
          <text x="1216" y={t.y + 4.5} textAnchor="end">{t.l}</text>
          <text x="2039" y={t.y + 4.5}>{t.r}</text>
        </g>
      ))}
      {chartCats.map((c) => (
        <g key={c.label}>
          <rect x={c.cx - 30.5} y={c.top} width="61" height={plotBottom - c.top} fill="#45b0e1" stroke="#000" strokeWidth="1.3" />
          <text x={c.cx + 1} y={c.top - 12.5} fontSize="13" fontWeight="700" fill="#404040" textAnchor="middle">{c.text}</text>
          <text
            x={c.cx + 3}
            y="902"
            fontSize="13.2"
            fill="#595959"
            textAnchor="end"
            transform={`rotate(-31 ${c.cx + 3} 902)`}
          >
            {c.label}
          </text>
        </g>
      ))}
      <path d={smoothPath} fill="none" stroke="#156082" strokeWidth="3.2" />
      {chartCats.map((c) => (
        <Diamond key={c.label} x={c.cx} y={c.py} />
      ))}
      <text x="1162.5" y="670" fontSize="15" fill="#595959" textAnchor="middle" fontFamily="Roboto, sans-serif" transform="rotate(-90 1162.5 670)">Frequency</text>
      <text x="2094" y="670" fontSize="15.5" fill="#595959" textAnchor="middle" fontFamily="Roboto, sans-serif" transform="rotate(-90 2094 670)">Cumulative %</text>
      <rect x="1433.5" y="975" width="32" height="9" fill="#45b0e1" stroke="#000" strokeWidth="1.2" />
      <text x="1469" y="984" fontSize="13" fill="#595959" textLength="201">Frequency of Delays/Inefficiences</text>
      <line x1="1698" x2="1733" y1="979.5" y2="979.5" stroke="#156082" strokeWidth="3.2" />
      <path d="M1715.7 974.5l5 5-5 5-5-5z" fill="#f6c3a2" stroke="#000" strokeWidth="1.2" />
      <text x="1736" y="984" fontSize="13" fill="#595959" textLength="82">Cumulative %</text>
    </svg>
  </div>
);

const Sheet = () => (
  <div className="h-[1051px] mt-[9px] flex">
    <div className="w-[2535px] shrink-0 relative overflow-hidden border-b border-[#d0d0d0]">
      <div className="h-[23px] flex font-['Roboto',sans-serif] text-[15.8px] text-[#555] border-b-2 border-[#ababab]">
        <div className="w-[35px] shrink-0 border-r border-[#c6c6c6] relative">
          <div className="absolute right-[4px] bottom-0 w-0 h-0 border-b-[14px] border-l-[14px] border-b-[#dcdcdc] border-l-transparent" />
        </div>
        {columns.map((c) => (
          <div key={c.n} className={`${c.cls} shrink-0 border-r border-[#dcdcdc] text-center leading-[23px]`}>{c.n}</div>
        ))}
      </div>
      <div className="flex bg-white">
        <div className="w-[35px] shrink-0 bg-[#f0f0f0] border-r border-[#ababab] font-['Roboto',sans-serif] text-[15.8px] text-[#555]">
          {Array.from({ length: 42 }, (_, i) => i + 1).map((n) => (
            <div key={n} className={`${rowHeights(n)} border-b border-[#dcdcdc] text-center flex justify-center pt-[3px] ${n === 6 ? 'items-end' : 'items-center'}`}>{n}</div>
          ))}
        </div>
        <div className="flex-1"><SheetTable /></div>
      </div>
      <ParetoChart />
    </div>
    <div className="flex-1 flex flex-col items-center">
      <div className="mt-[6px] w-0 h-0 border-b-[9px] border-x-[6px] border-b-[#555] border-x-transparent" />
      <div className="mt-[6px] w-[13px] h-[988px] rounded-full bg-[#6f6f6f]" />
      <div className="mt-[29px] w-0 h-0 border-t-[9px] border-x-[6px] border-t-[#555] border-x-transparent" />
    </div>
  </div>
);

const sheetTabs = [
  { name: 'Instructions', cls: 'w-[112px] bg-[#ffffcc] text-[#222]' },
  { name: 'Dashboard', cls: 'w-[107px] ml-[12px] bg-[#61cbf3] text-[#222]' },
  { name: 'Manufacturing', cls: 'w-[137px] ml-[11px] bg-[#7030a0] text-white' },
  { name: 'SalesandMarketing', cls: 'w-[171px] ml-[11px] bg-[#7030a0] text-white' },
  { name: 'ProjectManagement', cls: 'w-[181px] ml-[12px] bg-[#7030a0] text-white' },
  { name: 'CustomerService', cls: 'w-[153px] ml-[11px] bg-[#7030a0] text-white' },
  { name: 'FinancialAnalysis', cls: 'w-[154px] ml-[11px] bg-[#7030a0] text-white' }
];

const SheetTabs = () => (
  <div className="h-[40px] flex bg-[#efefef] text-[16px] whitespace-nowrap">
    <div className="w-[141px] shrink-0 flex items-center pl-[28px] gap-[22px] text-[#888]">
      <ChevronLeft size={17} strokeWidth={1.3} />
      <ChevronRight size={17} strokeWidth={1.3} />
    </div>
    {sheetTabs.map((t) => (
      <div key={t.name} className={`${t.cls} h-[30px] mt-[5px] rounded-[4px] flex items-center justify-center shrink-0`}>{t.name}</div>
    ))}
    <div className="ml-[12px] w-[185px] h-[35px] shrink-0 relative rounded-b-[4px] rounded-t-[6px] bg-gradient-to-b from-white to-[#c9aedb] border-x border-b border-[#e2e2e2] text-center text-[#333] font-medium leading-[32px]">
      ProcessImprovement
      <div className="absolute left-[9px] right-[9px] top-[30px] h-[2px] bg-[#107c41]" />
    </div>
    <div className="ml-[58px] mt-[12px]"><Plus size={17} color="#444" /></div>
    <div className="ml-[507px] mt-[12px]"><MoreVertical size={17} color="#333" strokeWidth={2.4} /></div>
    <div className="ml-[10px] mt-[9px] w-[506px] h-[21px] bg-[#f6f6f6] rounded-full flex items-center pl-[6px]">
      <div className="w-0 h-0 border-r-[8px] border-y-[6px] border-r-[#555] border-y-transparent" />
      <div className="ml-[6px] w-[447px] h-[11px] rounded-full bg-[#6f6f6f]" />
      <div className="ml-[21px] w-0 h-0 border-l-[8px] border-y-[6px] border-l-[#555] border-y-transparent" />
    </div>
  </div>
);

const StatusBar = () => (
  <div className="h-[27px] bg-[#f3f3f3] border-t border-[#fff] flex items-center text-[13px] text-[#444] whitespace-nowrap">
    <div className="ml-[14px] w-[62px] shrink-0">Ready</div>
    <div className="ml-[1px] shrink-0">
      <svg width="18" height="20" viewBox="0 0 18 20"><rect x="1" y="1" width="13" height="15" fill="none" stroke="#444" strokeWidth="1.2" /><path d="M1 5h13" stroke="#444" strokeWidth="2" /><circle cx="11" cy="13" r="5" fill="#f3f3f3" stroke="#444" strokeWidth="1.3" /><circle cx="11" cy="13" r="1.6" fill="#444" /></svg>
    </div>
    <div className="ml-[20px] shrink-0">
      <svg width="20" height="20" viewBox="0 0 20 20"><circle cx="9" cy="3" r="2.2" fill="none" stroke="#444" /><path d="M1 6l5 2v4l-3 7M17 6l-5 2v4l3 7" fill="none" stroke="#444" strokeWidth="1.1" /><path d="M11 12l7 7M18 12l-7 7" stroke="#444" strokeWidth="1.2" /></svg>
    </div>
    <div className="ml-[4px] w-[160px] shrink-0 font-semibold text-[12.5px]">Accessibility: Investigate</div>
    <div className="ml-[1889px] shrink-0 w-[50px] h-full bg-[#e0e0e0] flex items-center justify-center"><LayoutGrid size={17} color="#444" strokeWidth={1.3} /></div>
    <div className="w-[50px] shrink-0 flex items-center justify-center">
      <svg width="18" height="18" viewBox="0 0 18 18"><rect x="1" y="1" width="16" height="16" fill="none" stroke="#444" strokeWidth="1.3" /><rect x="4" y="3.5" width="10" height="11" fill="none" stroke="#444" /><path d="M6 7h6M6 10h6" stroke="#444" /></svg>
    </div>
    <div className="w-[50px] shrink-0 flex items-center justify-center">
      <svg width="18" height="18" viewBox="0 0 18 18"><path d="M1 1h16v16H1zM1 12h16M11 1v11" fill="none" stroke="#444" strokeWidth="1.3" /></svg>
    </div>
    <div className="ml-[6px] shrink-0 w-[12px] h-[1px] bg-[#444]" />
    <div className="ml-[5px] shrink-0 w-[125px] h-[1px] bg-[#555] relative">
      <div className="absolute left-[60px] -top-[8px] w-[6px] h-[16px] bg-[#555]" />
    </div>
    <div className="ml-[5px] shrink-0 text-[18px] font-light leading-none">+</div>
    <div className="ml-[12px] shrink-0 text-[#777]">100%</div>
  </div>
);

const ChromeIcon = () => (
  <svg width="34" height="38" viewBox="0 0 34 38">
    <path d="M15 1a14 14 0 0 1 12.2 7H15a7 7 0 0 0-6.1 3.5L3 4.8A14 14 0 0 1 15 1z" fill="#ea4335" />
    <path d="M3 4.8l6 10.5a7 7 0 0 0 6 6.7l-4 7A14 14 0 0 1 3 4.8z" fill="#34a853" />
    <path d="M27.2 8A14 14 0 0 1 11 29l6-10a7 7 0 0 0 3-10z" fill="#fbbc05" />
    <circle cx="15" cy="15" r="5.5" fill="#4285f4" stroke="#fff" strokeWidth="1.5" />
    <circle cx="23" cy="27" r="10" fill="#7e57c2" />
    <text x="23" y="32" fontSize="13" fill="#fff" textAnchor="middle">J</text>
  </svg>
);

const GiftArt = () => (
  <svg width="72" height="42" viewBox="0 0 72 42">
    <g fill="#d8401f">
      <circle cx="8" cy="16" r="6" />
      <circle cx="17" cy="8" r="6" />
      <circle cx="26" cy="14" r="6" />
      <circle cx="14" cy="21" r="6" />
      <circle cx="27" cy="5" r="5" />
      <circle cx="8" cy="7" r="4" />
    </g>
    <path d="M16 25l20 15 5-6-16-14z" fill="#7cb46a" />
    <rect x="42" y="14" width="30" height="27" rx="2" fill="#e9686a" />
    <rect x="54" y="14" width="5" height="27" fill="#f6a4a4" />
    <rect x="40" y="13" width="33" height="5" fill="#f08080" />
    <path d="M56 13L46 1l8 3zM57 13l10-12-8 3z" fill="#f0a0a0" stroke="#c05050" strokeWidth="1" />
  </svg>
);

const taskIcons = [
  { key: 'explorer', underline: true, node: (
    <svg width="28" height="34" viewBox="0 0 28 34"><path d="M1 3h10l3 4h13v24H1z" fill="#fcd466" /><rect x="1" y="1" width="12" height="6" rx="1" fill="#e0a82e" /><path d="M8 31V20h12v11h-4v-6h-4v6z" fill="#0f7ad6" /></svg>
  ) },
  { key: 'snip', underline: false, node: (
    <svg width="28" height="36" viewBox="0 0 28 36"><circle cx="13" cy="11" r="10" fill="#fff" stroke="#e85a5a" strokeWidth="1.5" /><path d="M6 5l11 18M17 3L11 21" stroke="#777" strokeWidth="1.2" /><circle cx="9" cy="28" r="4" fill="none" stroke="#2b88d8" strokeWidth="2" /><circle cx="19" cy="30" r="4" fill="none" stroke="#2b88d8" strokeWidth="2" /></svg>
  ) },
  { key: 'opera', underline: true, node: (
    <svg width="30" height="36" viewBox="0 0 30 36"><ellipse cx="15" cy="18" rx="11" ry="15" fill="none" stroke="#d3121b" strokeWidth="7" /></svg>
  ) },
  { key: 'chrome', underline: true, node: <ChromeIcon /> },
  { key: 'upwork', underline: true, node: (
    <div className="w-[26px] h-[26px] rounded-full bg-[#14a800] text-white text-[13px] font-bold flex items-center justify-center leading-none">up</div>
  ) },
  { key: 'ppt', underline: true, node: (
    <svg width="32" height="32" viewBox="0 0 32 32"><circle cx="16" cy="16" r="15" fill="#ed6c47" /><path d="M16 1a15 15 0 0 1 15 15H16z" fill="#ff8f6b" /><rect x="1" y="8" width="15" height="16" rx="1" fill="#c43e1c" /><text x="8.5" y="21" fontSize="13" fontWeight="700" fill="#fff" textAnchor="middle">P</text></svg>
  ) },
  { key: 'notepad', underline: true, node: (
    <svg width="30" height="34" viewBox="0 0 30 34"><path d="M9 1l20 4-6 26L3 27z" fill="#bfe3f5" stroke="#7fb6d6" /><path d="M9 1l20 4-1 4-20-4z" fill="#5a9ccf" /></svg>
  ) },
  { key: 'excel', underline: true, node: <ExcelLogo size={30} /> }
];

const Taskbar = () => (
  <div className="h-[50px] bg-[#d1dfea] flex items-center font-['Noto_Sans',sans-serif] whitespace-nowrap text-[#222]">
    <div className="ml-[19px] w-[22px] h-[22px] grid grid-cols-2 gap-[2px] shrink-0">
      <div className="bg-black" /><div className="bg-black" /><div className="bg-black" /><div className="bg-black" />
    </div>
    <div className="ml-[20px] w-[359px] h-[50px] bg-white border border-[#b8c4cf] flex items-center shrink-0 text-[17.5px] text-[#333]">
      <Search size={22} color="#333" className="ml-[14px] -scale-x-100" strokeWidth={1.4} />
      <span className="ml-[11px] w-[220px]">Type here to search</span>
      <GiftArt />
    </div>
    <div className="ml-[21px] w-[22px] h-[26px] flex flex-col justify-between items-center shrink-0">
      <div className="w-full h-[1px] bg-[#222]" />
      <div className="w-full h-[12px] border border-[#222]" />
      <div className="w-full h-[1px] bg-[#222]" />
    </div>
    <div className="ml-[19px] flex shrink-0">
      {taskIcons.map((t) => (
        <div key={t.key} className="w-[62px] h-[50px] relative flex items-center justify-center">
          {t.node}
          {t.underline && <div className="absolute left-[5px] right-[5px] bottom-0 h-[3px] bg-[#0078d4]" />}
        </div>
      ))}
    </div>
    <div className="ml-[1123px] shrink-0">
      <svg width="24" height="36" viewBox="0 0 24 36"><path d="M2 6h8l-1 5-1-2-1 4-1-3-1 3z" fill="#7fa5c6" /><rect x="13" y="2" width="5" height="24" rx="2.5" fill="#a7d3f0" /><rect x="14.5" y="10" width="2" height="18" fill="#1a78c2" /><circle cx="15.5" cy="28" r="4.5" fill="#1a78c2" /></svg>
    </div>
    <div className="ml-[10px] w-[105px] shrink-0 text-[16.5px]">Cold weather</div>
    <div className="ml-[25px] shrink-0"><ChevronUp size={20} strokeWidth={1.3} /></div>
    <div className="ml-[11px] shrink-0"><Video size={20} strokeWidth={1.2} /></div>
    <div className="ml-[8px] shrink-0"><Volume1 size={22} strokeWidth={1.2} /></div>
    <div className="ml-[9px] shrink-0 relative w-[22px] h-[18px]">
      <div className="absolute left-0 top-[2px] w-[17px] h-[13px] rounded-full bg-[#707070]" />
      <div className="absolute right-0 bottom-[-3px] w-[12px] h-[12px] rounded-full bg-[#0a6cc2] text-white text-[9px] font-bold flex items-center justify-center">i</div>
    </div>
    <div className="ml-[7px] shrink-0"><Monitor size={22} strokeWidth={1.2} /></div>
    <div className="ml-[11px] shrink-0 w-[70px] text-center text-[14px] leading-[24px]">11:20 AM<br />1/26/2024</div>
    <div className="ml-[20px] shrink-0"><MessageSquare size={24} strokeWidth={1.1} /></div>
  </div>
);

export default function App() {
  return (
    <div className="w-[2560px] h-[1440px] overflow-hidden flex flex-col bg-[#f0f0f0] font-['Noto_Sans',sans-serif]">
      <TitleBar />
      <TabRow />
      <Ribbon />
      <FormulaBar />
      <Sheet />
      <SheetTabs />
      <StatusBar />
      <Taskbar />
    </div>
  );
}
